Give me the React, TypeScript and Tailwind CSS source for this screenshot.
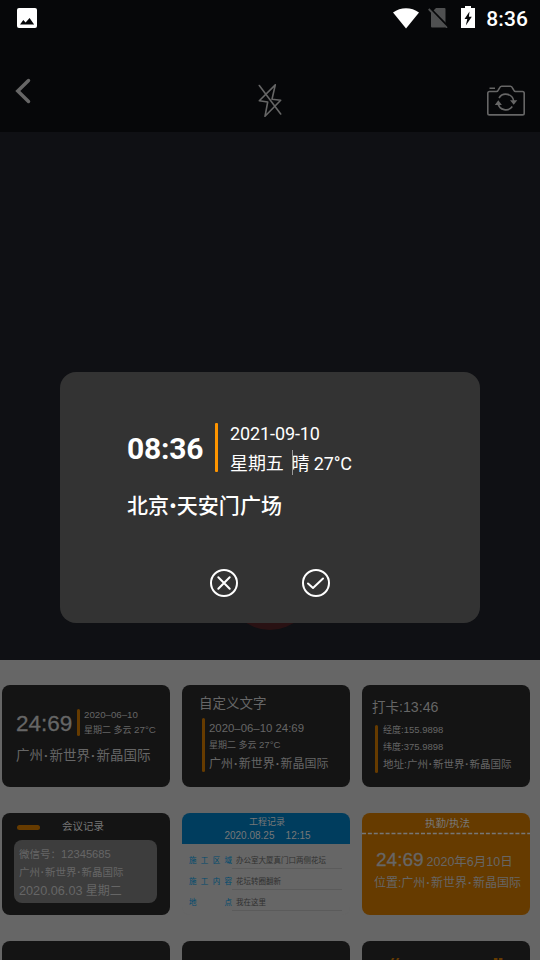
import type { ReactNode } from 'react';

const CARD_FONT = "font-['Liberation_Sans','Noto_Sans_CJK_SC',sans-serif]";
const ROBOTO = "font-[Roboto,'Noto_Sans_CJK_SC',sans-serif]";

function Dot() {
  return <span className="inline-block w-[0.48em] text-center font-bold">·</span>;
}

function Place({ prefix = '' }: { prefix?: string }) {
  return (
    <>
      {prefix}广州<Dot />新世界<Dot />新晶国际
    </>
  );
}

function StatusBar() {
  return (
    <div className="flex h-9 items-center justify-between pl-[17px] pr-3">
      <svg width="20" height="20" viewBox="0 0 20 20">
        <rect width="20" height="20" rx="2" fill="#fff" />
        <path d="M3 16.4l3.300-4.400 2.300 2.500 4-4.600 4.500 6.500z" fill="#060709" />
      </svg>
      <div className="flex items-center">
        <svg width="26" height="21" viewBox="0 0 26 21" className="mr-[9px]">
          <path d="M0 4.600C7.500-1.300 18.500-1.300 26 4.600L13 20.500z" fill="#fff" />
        </svg>
        <svg width="20" height="21" viewBox="0 0 20 21" className="-mt-0.5 mr-[13px]">
          <path d="M8 1h8.500q1 0 1 1v17.500q0 1-1 1H4q-1 0-1-1V6z" fill="#4f5051" />
          <path d="M1.900 1.300l18 18.500" stroke="#060709" strokeWidth="2.500" />
          <path d="M.7 2l18.300 18.800" stroke="#4f5051" strokeWidth="1.800" />
        </svg>
        <svg width="14" height="22" viewBox="0 0 14 22" className="-mt-0.5 mr-[11px]">
          <path d="M4 0h6v2h4v20H0V2h4z" fill="#fff" />
          <path d="M8.500 5.500L3.500 13H6.300l-1.500 6.500L10.800 10.800H7.900z" fill="#060709" />
        </svg>
        <span className="pt-px text-[21px] font-medium leading-9 tracking-[0.1px] text-white">8:36</span>
      </div>
    </div>
  );
}

function Toolbar() {
  return (
    <div className="flex h-24 items-start justify-between px-[15px] pt-[42px]">
      <svg width="38" height="26" viewBox="0 0 38 26" fill="none" stroke="#666" strokeWidth="3.500">
        <path d="M13.500 2.500L2.800 13l10.700 10.500" strokeLinecap="round" />
      </svg>
      <svg width="24" height="34" viewBox="0 0 24 34" className="mt-[6px]" fill="none" stroke="#666" strokeWidth="1.600" strokeLinejoin="round" strokeLinecap="round">
        <path d="M17.300.9L1.300 16.700l8.400 1.300L7 32.300l15.700-16-8.700-1z" />
        <path d="M1.300 1.500l21.400 28.500" />
      </svg>
      <svg width="38" height="31" viewBox="0 0 38 31" className="mt-[7px]" fill="none" stroke="#666" strokeWidth="1.600">
        <path d="M2.500 6.500h7c2.500 0 2.500-5.300 5-5.300h9c2.500 0 2.500 5.300 5 5.300h7q1.700 0 1.700 1.700v20q0 1.700-1.700 1.700h-33q-1.700 0-1.700-1.700v-20q0-1.700 1.700-1.700z" />
        <path d="M2.500 3.300h5.500M12 13a8 8 0 0 1 14.700 3M25.300 21.500a8 8 0 0 1-14.300-3" />
        <path d="M23 15.200h7.300l-3.600 4.500zM7.800 20h7.100l-3.600-4.700z" fill="#666" stroke="none" />
      </svg>
    </div>
  );
}

function Card({ className = 'bg-[#141414]', children }: { className?: string; children?: ReactNode }) {
  return (
    <div className={`h-[102px] w-[168px] overflow-hidden whitespace-nowrap rounded-lg text-[#666] ${className}`}>
      {children}
    </div>
  );
}

function ClassicCard() {
  return (
    <Card className="bg-[#141414] pl-3.5 pt-6">
      <div className="flex items-start">
        <span className="w-[61px] text-[22.500px] leading-[30px] [-webkit-text-stroke:0.3px]">24:69</span>
        <span className="h-[27px] w-[3px] rounded-full bg-[#663b00]" />
        <div className="ml-[4px] text-[9.700px]">
          <div className="leading-3">2020–06–10</div>
          <div className="mt-[3px] text-[9px] leading-3">星期二 多云 <span className="text-[9.800px]">27°C</span></div>
        </div>
      </div>
      <div className="mt-[7px] text-[13.500px] leading-5"><Place /></div>
    </Card>
  );
}

function CustomTextCard() {
  return (
    <Card className="bg-[#141414] pl-[17px] pt-[9px]">
      <div className="text-[13.500px] leading-5">自定义文字</div>
      <div className="mt-[4px] flex pl-[3px]">
        <span className="h-[54px] w-[3px] rounded-full bg-[#663b00]" />
        <div className="ml-[4px]">
          <div className="mt-[2px] text-[11.400px] leading-4">2020–06–10 24:69</div>
          <div className="mt-[2px] text-[9px] leading-3.5">星期二 多云 <span className="text-[9.600px]">27°C</span></div>
          <div className="mt-[4px] text-[12px] leading-4"><Place /></div>
        </div>
      </div>
    </Card>
  );
}

function CheckInCard() {
  return (
    <Card className="bg-[#141414] pl-[10px] pt-3">
      <div className="text-[13.500px] leading-5">打卡<span className="text-[14.200px]">:13:46</span></div>
      <div className="mt-[6px] flex pl-[3px]">
        <span className="mt-px h-12 w-[3px] rounded-full bg-[#663b00]" />
        <div className="ml-[5px]">
          <div className="text-[9px] leading-3">经度<span className="text-[9.500px]">:155.9898</span></div>
          <div className="mt-[5px] text-[9px] leading-3">纬度<span className="text-[9.500px]">:375.9898</span></div>
          <div className="mt-[4px] text-[10.500px] leading-3.5"><Place prefix="地址:" /></div>
        </div>
      </div>
    </Card>
  );
}

function MeetingCard() {
  return (
    <Card className="bg-[#141414] pl-3 pt-[5px]">
      <div className="flex items-center">
        <span className="ml-[3px] mt-[3px] h-[5px] w-[23px] rounded-full bg-[#663b00]" />
        <span className="ml-[22px] text-[10.500px] leading-4 text-[#777]">会议记录</span>
      </div>
      <div className="mt-[6px] h-[63px] w-[143px] rounded-lg bg-[#3d3d3d] pl-[5px] pt-[6px]">
        <div className="text-[10.500px] leading-4">微信号：<span className="text-[11.200px]">12345685</span></div>
        <div className="mt-[2px] text-[10.500px] leading-4"><Place /></div>
        <div className="mt-[3px] text-[12px] leading-4"><span className="text-[12.700px]">2020.06.03</span> 星期二</div>
      </div>
    </Card>
  );
}

const workRows = [
  { label: ['施', '工', '区', '域'], value: '办公室大厦真门口两侧花坛' },
  { label: ['施', '工', '内', '容'], value: '花坛转圈翻新' },
  { label: ['地', '点'], value: '我在这里' },
];

function WorkCard() {
  return (
    <Card className="bg-[#666]">
      <div className="h-[31px] bg-[#003d5e] pt-[2px] text-center text-[#777]">
        <div className="pl-[2px] text-[9px] leading-3.5">工程记录</div>
        <div className="whitespace-pre pl-[3px] text-[10px] leading-[13px]">2020.08.25    12:15</div>
      </div>
      <div className="pl-[7px] pt-[5px] text-[7.500px]">
        {workRows.map((row) => (
          <div key={row.value} className="flex h-[21px]">
            <div className="flex w-[43px] justify-between leading-6 text-[#004a6e]">
              {row.label.map((c) => <span key={c}>{c}</span>)}
            </div>
            <div className="h-5 w-[110px] border-b border-[#5b5b5b] pl-[4px] leading-6 text-[#303030]">{row.value}</div>
          </div>
        ))}
      </div>
    </Card>
  );
}

function DutyCard() {
  return (
    <Card className="bg-[#663b00]">
      <div className="h-[19px] pt-[2px] text-center text-[10.500px] leading-4 text-[#777]"><span className="pl-[3px]">执勤/执法</span></div>
      <svg width="168" height="3" className="block">
        <path d="M0 1.500h168" stroke="#777" strokeWidth="1.300" strokeDasharray="4 1.900" />
      </svg>
      <div className="flex items-baseline pl-[14px] pt-[13px] leading-6">
        <span className="text-[19px] [-webkit-text-stroke:0.3px]">24:69</span>
        <span className="ml-[3px] text-[12.500px]">2020年6月10日</span>
      </div>
      <div className="-mt-px pl-3 text-[12px] leading-5"><Place prefix="位置:" /></div>
    </Card>
  );
}

function QuoteCard() {
  return (
    <Card>
      <div className="flex justify-between pl-[27px] pr-[26px] pt-3 text-[24px] font-bold leading-7 text-[#663b00]">
        <span>“</span>
        <span>”</span>
      </div>
    </Card>
  );
}

function WatermarkDialog() {
  return (
    <div className={`absolute left-[60px] top-[372px] h-[251px] w-[420px] rounded-2xl bg-[#333] pl-[67px] pt-[51px] text-white ${ROBOTO}`}>
      <div className="flex">
        <span className="w-[88px] text-[30px] font-bold leading-[52px] tracking-[-0.2px]">08:36</span>
        <span className="h-[49px] w-[3px] rounded-[1px] bg-[#ff9500]" />
        <div className="ml-3 whitespace-pre text-[18px] tracking-[-0.1px]">
          <div className="leading-[22px]">2021-09-10</div>
          <div className="mt-[7px] flex leading-6">
            <span>星期五  </span>
            <span className="relative -ml-px">
              <span className="absolute left-px top-[-2px] h-[25px] w-px bg-[#999]" />
              晴 27°C
            </span>
          </div>
        </div>
      </div>
      <div className="mt-[14px] text-[21px] font-medium leading-8 tracking-[0.1px]">北京•天安门广场</div>
      <div className="mt-[47px] flex gap-16 pl-[83px]">
        <svg width="28" height="28" viewBox="0 0 28 28" fill="none" stroke="#fff" strokeWidth="2" strokeLinecap="round">
          <circle cx="14" cy="14" r="13" />
          <path d="M8.300 8.300l11.400 11.400M19.700 8.300L8.300 19.700" />
        </svg>
        <svg width="28" height="28" viewBox="0 0 28 28" fill="none" stroke="#fff" strokeWidth="2" strokeLinecap="round" strokeLinejoin="round">
          <circle cx="14" cy="14" r="13" />
          <path d="M6 14.500l5 4.500L21 9.500" />
        </svg>
      </div>
    </div>
  );
}

export default function App() {
  return (
    <div className="relative flex h-[960px] w-[540px] flex-col overflow-hidden bg-[#666]">
      <header className={`h-[132px] shrink-0 bg-[#060709] ${ROBOTO}`}>
        <StatusBar />
        <Toolbar />
      </header>
      <main className="flex h-[528px] shrink-0 items-end justify-center bg-[#0f1014] pb-[30px]">
        <span className="size-[86px] rounded-full bg-[#291113]" />
      </main>
      <section className={`grid shrink-0 grid-cols-[168px_168px_168px] gap-x-3 gap-y-[26px] pl-[2px] pt-[25px] ${CARD_FONT}`}>
        <ClassicCard />
        <CustomTextCard />
        <CheckInCard />
        <MeetingCard />
        <WorkCard />
        <DutyCard />
        <Card />
        <Card />
        <QuoteCard />
      </section>
      <WatermarkDialog />
    </div>
  );
}
